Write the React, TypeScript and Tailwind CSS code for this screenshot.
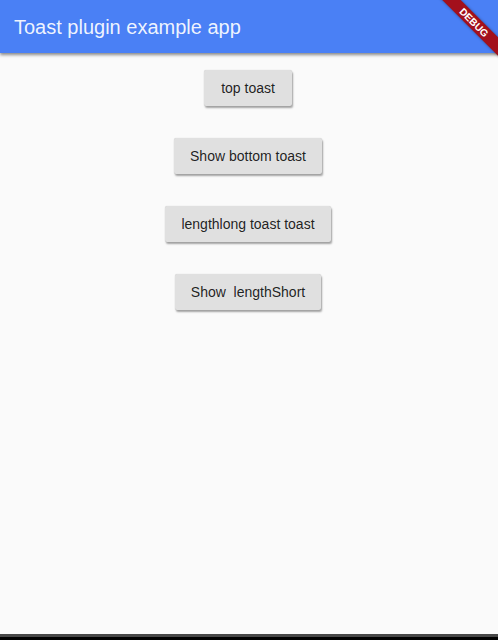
import React from "react";

function Btn({ label }: { label: string }) {
  return (
    <button className="h-[36px] min-w-[88px] px-4 rounded-[2px] bg-[#e0e0e0] text-[14px] text-[rgba(0,0,0,0.87)] whitespace-pre shadow-[1px_2px_2px_rgba(0,0,0,0.35),0_0_1px_rgba(0,0,0,0.2)] font-['Liberation_Sans',Arial,sans-serif]">
      {label}
    </button>
  );
}

export default function App() {
  return (
    <div className="relative h-[640px] w-full overflow-hidden bg-[#fafafa] flex flex-col font-['Liberation_Sans',Arial,sans-serif]">
      <header className="h-[53px] shrink-0 bg-[#4a80f5] flex items-center px-[14px] shadow-[0_2px_3px_rgba(0,0,0,0.45)] z-10">
        <h1 className="text-[20px] text-[rgba(255,255,255,0.92)] leading-none">Toast plugin example app</h1>
      </header>
      <main className="flex flex-col items-center pt-[17px] pr-[2px] gap-[32px]">
        <Btn label="top toast" />
        <Btn label="Show bottom toast" />
        <Btn label="lengthlong toast toast" />
        <Btn label="Show  lengthShort" />
      </main>
      <div className="mt-auto h-[6px] shrink-0 bg-[#000] border-t-[3px] border-[#474747]" />
      <div className="absolute left-[421px] top-[16px] w-[106px] h-[13px] rotate-45 bg-[#a3101c] flex items-center justify-center z-20 shadow-[0_0_3px_rgba(0,0,0,0.4)]">
        <span className="text-[10px] font-bold text-white leading-none">DEBUG</span>
      </div>
    </div>
  );
}
